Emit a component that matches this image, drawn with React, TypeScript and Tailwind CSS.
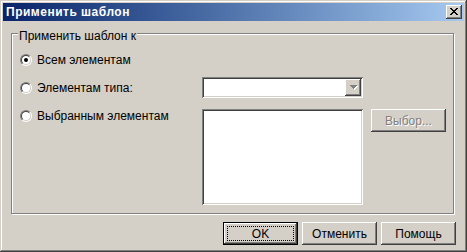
const raised =
  "shadow-[inset_-1px_-1px_#404040,inset_1px_1px_#ffffff,inset_-2px_-2px_#808080,inset_2px_2px_#d4d0c8]";
const sunken =
  "shadow-[inset_1px_1px_#808080,inset_-1px_-1px_#ffffff,inset_2px_2px_#404040,inset_-2px_-2px_#d4d0c8]";

const Radio = ({ checked }: { checked?: boolean }) => (
  <span className="flex h-3 w-3 shrink-0 items-center justify-center rounded-full border border-t-[#808080] border-l-[#808080] border-r-white border-b-white">
    <span className="flex h-[10px] w-[10px] items-center justify-center rounded-full border border-t-[#404040] border-l-[#404040] border-r-[#d4d0c8] border-b-[#d4d0c8] bg-white">
      {checked && <span className="h-1 w-1 rounded-full bg-black" />}
    </span>
  </span>
);

const CloseIcon = () => (
  <svg width="8" height="7" viewBox="0 0 8 7" shapeRendering="crispEdges">
    <path
      fill="#000"
      d="M0 0h2v1H0z M6 0h2v1H6z M1 1h2v1H1z M5 1h2v1H5z M2 2h4v1H2z M3 3h2v1H3z M2 4h4v1H2z M1 5h2v1H1z M5 5h2v1H5z M0 6h2v1H0z M6 6h2v1H6z"
    />
  </svg>
);

const ArrowDown = () => (
  <svg width="8" height="5" viewBox="0 0 8 5" shapeRendering="crispEdges">
    <path fill="#ffffff" d="M1 1h7v1H1z M2 2h5v1H2z M3 3h3v1H3z M4 4h1v1H4z" />
    <path fill="#808080" d="M0 0h7v1H0z M1 1h5v1H1z M2 2h3v1H2z M3 3h1v1H3z" />
  </svg>
);

const Button = ({ label, disabled }: { label: string; disabled?: boolean }) => (
  <div className={`flex h-[23px] w-[75px] items-center justify-center bg-[#d4d0c8] ${raised}`}>
    <span
      className={
        disabled ? "text-[#808080] [text-shadow:1px_1px_0_#ffffff]" : "text-black"
      }
    >
      {label}
    </span>
  </div>
);

export default function App() {
  return (
    <div className="h-[252px] w-[467px] bg-[#d4d0c8] p-[3px] font-['Liberation_Sans',Arial,sans-serif] text-[12px] leading-[14px] text-black shadow-[inset_-1px_-1px_#404040,inset_1px_1px_#d4d0c8,inset_-2px_-2px_#808080,inset_2px_2px_#ffffff]">
      <div className="flex h-full flex-col">
        {/* title bar */}
        <div className="flex h-[18px] shrink-0 items-center justify-between bg-linear-to-r from-[#0a246a] to-[#a6caf0] pl-[3px] pr-[2px]">
          <span className="text-[12px] font-bold tracking-[0.5px] text-white">Применить шаблон</span>
          <div className={`flex h-[14px] w-[16px] items-start bg-[#d4d0c8] pl-[4px] pt-[3px] ${raised}`}>
            <CloseIcon />
          </div>
        </div>

        {/* group box */}
        <div className="relative ml-[8px] mt-[12px] h-[181px] w-[443px] shrink-0 border border-[#808080] shadow-[1px_1px_0_#ffffff,inset_1px_1px_0_#ffffff]">
          <span className="absolute -top-[5px] left-[6px] bg-[#d4d0c8] px-[1px]">Применить шаблон к</span>

          <div className="flex flex-col pl-[8px] pt-[15px]">
            <div className="flex h-[21px] items-center gap-[5px]">
              <Radio checked />
              <span>Всем элементам</span>
            </div>

            <div className="mt-[7px] flex h-[21px] items-center">
              <div className="flex w-[182px] items-center gap-[5px]">
                <Radio />
                <span>Элементам типа:</span>
              </div>
              <div className={`flex h-[21px] w-[161px] justify-end bg-white p-[2px] ${sunken}`}>
                <div className={`flex h-full w-[16px] items-center justify-center bg-[#d4d0c8] pl-[1px] ${raised}`}>
                  <ArrowDown />
                </div>
              </div>
            </div>

            <div className="mt-[11px] flex items-start">
              <div className="flex h-[14px] w-[182px] items-center gap-[5px]">
                <Radio />
                <span>Выбранным элементам</span>
              </div>
              <div className={`h-[96px] w-[161px] bg-white ${sunken}`} />
              <div className="ml-[8px]">
                <Button label="Выбор..." disabled />
              </div>
            </div>
          </div>
        </div>

        {/* buttons */}
        <div className="mt-[8px] flex justify-end gap-[4px] pr-[8px]">
          <div className={`flex h-[23px] w-[75px] border border-black bg-[#d4d0c8] p-[3px] ${raised}`}>
            <span className="flex flex-1 items-center justify-center border border-dotted border-black">OK</span>
          </div>
          <Button label="Отменить" />
          <Button label="Помощь" />
        </div>
      </div>
    </div>
  );
}
